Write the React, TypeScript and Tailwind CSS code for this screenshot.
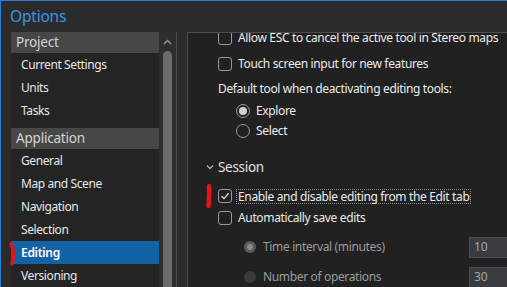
import React from "react";

const font = { fontFamily: '"Noto Sans", "Open Sans", sans-serif' };

type NavItem = { label: string; header?: boolean; selected?: boolean };

const projectItems: NavItem[] = [
  { label: "Project", header: true },
  { label: "Current Settings" },
  { label: "Units" },
  { label: "Tasks" },
];

const appItems: NavItem[] = [
  { label: "Application", header: true },
  { label: "General" },
  { label: "Map and Scene" },
  { label: "Navigation" },
  { label: "Selection" },
  { label: "Editing", selected: true },
  { label: "Versioning" },
];

function NavRow({ item }: { item: NavItem }) {
  if (item.header) {
    return (
      <div className="h-[21px] bg-[#474747] pl-[5px] flex items-center text-[13.5px] tracking-[-0.2px] text-[#d4d4d4] whitespace-nowrap">
        {item.label}
      </div>
    );
  }
  return (
    <div
      className={
        item.selected
          ? "h-[23px] bg-[#1462a6] pl-[10px] flex items-center text-[12px] tracking-[-0.3px] font-semibold text-white whitespace-nowrap"
          : "h-[23px] pl-[10px] flex items-center text-[12px] tracking-[-0.4px] text-[#e8e8e8] whitespace-nowrap"
      }
    >
      {item.label}
    </div>
  );
}

function CheckBox({ checked }: { checked?: boolean }) {
  return (
    <div className="w-[14px] h-[14px] rounded-[3px] border border-[#9a9a9a] flex items-center justify-center shrink-0">
      {checked && (
        <svg width="10" height="10" viewBox="0 0 10 10">
          <path d="M1.5 5.2 L4 7.6 L8.6 2.2" fill="none" stroke="#d8d8d8" strokeWidth="1.4" />
        </svg>
      )}
    </div>
  );
}

function Radio({ checked }: { checked?: boolean }) {
  return (
    <div className="w-[14px] h-[14px] rounded-full border border-[#9a9a9a] flex items-center justify-center shrink-0">
      {checked && <div className="w-[8px] h-[8px] rounded-full bg-[#cfcfcf]" />}
    </div>
  );
}

const label = "text-[12px] tracking-[-0.35px] text-[#ececec] whitespace-nowrap";

function CheckRow({ text, checked, focus, h }: { text: string; checked?: boolean; focus?: boolean; h: string }) {
  return (
    <div className={`flex items-center gap-[6px] pl-[30px] ${h}`}>
      <CheckBox checked={checked} />
      <span
        className={
          focus
            ? `${label} border border-dotted border-[#8a8a8a] px-[1px] leading-[13px] -ml-[2px]`
            : label
        }
      >
        {text}
      </span>
    </div>
  );
}

export default function App() {
  return (
    <div
      className="relative w-[507px] h-[287px] overflow-hidden bg-[#2b2b2b] border-t border-l border-[#2c7fd2] flex flex-col"
      style={font}
    >
      <div className="h-[31px] shrink-0 pl-[9px] flex items-center text-[15.5px] tracking-[-0.2px] text-[#3a95e8]">
        Options
      </div>

      <div className="flex flex-1 min-h-0">
        {/* navigation list */}
        <div className="ml-[10px] w-[166px] shrink-0 flex bg-[#242424] border-r border-[#4e4e4e]">
          <div className="flex-1 flex flex-col">
            {projectItems.map((it) => (
              <NavRow key={it.label} item={it} />
            ))}
            <div className="h-[6px]" />
            {appItems.map((it) => (
              <NavRow key={it.label} item={it} />
            ))}
          </div>
          <div className="w-[17px] shrink-0 bg-[#2e2e2e] flex flex-col items-center">
            <svg width="9" height="6" viewBox="0 0 9 6" className="mt-[7px]">
              <path d="M1 5 L4.5 1.5 L8 5" fill="none" stroke="#9a9a9a" strokeWidth="1.3" />
            </svg>
            <div className="mt-[6px] w-[9px] flex-1 bg-[#6b6b6b] rounded-t-full" />
          </div>
        </div>

        {/* settings panel */}
        <div className="ml-[10px] flex-1 min-w-0 bg-[#212121] border-t border-l border-[#4e4e4e] overflow-hidden">
          <div className="-mt-[8px] flex flex-col">
            <CheckRow h="h-[26px]" text="Allow ESC to cancel the active tool in Stereo maps" />
            <CheckRow h="h-[26px]" text="Touch screen input for new features" />
            <div className={`h-[24px] pl-[30px] flex items-center ${label}`}>
              Default tool when deactivating editing tools:
            </div>
            <div className="h-[19px] pl-[48px] flex items-center gap-[6px]">
              <Radio checked />
              <span className={label}>Explore</span>
            </div>
            <div className="h-[22px] pl-[48px] flex items-center gap-[6px]">
              <Radio />
              <span className={label}>Select</span>
            </div>
            <div className="mt-[12px] h-[26px] pl-[18px] flex items-center gap-[4px]">
              <svg width="8" height="6" viewBox="0 0 8 6">
                <path d="M1 1.5 L4 4.5 L7 1.5" fill="none" stroke="#b0b0b0" strokeWidth="1.3" />
              </svg>
              <span className="text-[13.5px] tracking-[-0.3px] text-[#e0e0e0]">Session</span>
            </div>
            <div className="h-[3px]" />
            <CheckRow h="h-[26px]" text="Enable and disable editing from the Edit tab" checked focus />
            <CheckRow h="h-[18px]" text="Automatically save edits" />
            <div className="mt-[8px] h-[24px] pl-[56px] flex items-center">
              <div className="w-[12px] h-[12px] shrink-0 rounded-full bg-[#5a5a5a] flex items-center justify-center">
                <div className="w-[6px] h-[6px] rounded-full bg-[#8a8a8a]" />
              </div>
              <span className="ml-[7px] shrink-0 text-[12px] tracking-[-0.35px] text-[#9c9c9c] w-[206px] whitespace-nowrap">
                Time interval (minutes)
              </span>
              <div className="h-[21px] w-[60px] shrink-0 bg-[#383b40] border border-[#4a4d52] pl-[4px] flex items-center text-[12px] text-[#a8a8a8]">
                10
              </div>
            </div>
            <div className="mt-[6px] h-[24px] pl-[56px] flex items-center">
              <div className="w-[12px] h-[12px] shrink-0 rounded-full bg-[#3a3a3a]" />
              <span className="ml-[7px] shrink-0 text-[12px] tracking-[-0.35px] text-[#9c9c9c] w-[206px] whitespace-nowrap">
                Number of operations
              </span>
              <div className="h-[21px] w-[60px] shrink-0 bg-[#383b40] border border-[#4a4d52] pl-[4px] flex items-center text-[12px] text-[#a8a8a8]">
                30
              </div>
            </div>
          </div>
        </div>
      </div>

      {/* red annotation marks */}
      <svg className="absolute left-[7px] top-[241px]" width="10" height="24" viewBox="0 0 10 24">
        <path d="M3 2 C6 7 6.5 13 4 22" fill="none" stroke="#e41414" strokeWidth="3.5" strokeLinecap="round" />
      </svg>
      <svg className="absolute left-[203px] top-[182px]" width="10" height="26" viewBox="0 0 10 26">
        <path d="M5 3 C5.5 10 5 16 4.5 23" fill="none" stroke="#e41414" strokeWidth="4.5" strokeLinecap="round" />
      </svg>
    </div>
  );
}
